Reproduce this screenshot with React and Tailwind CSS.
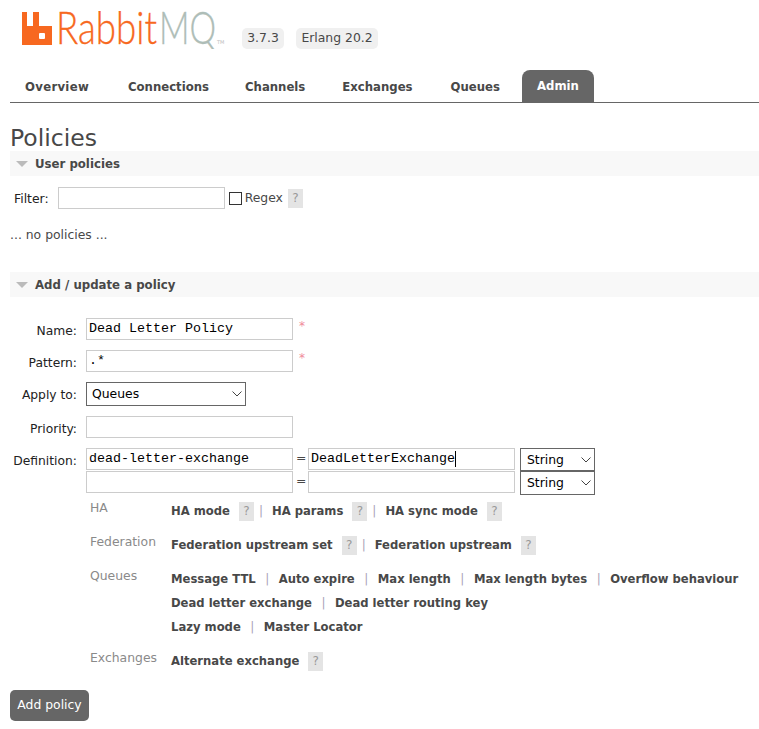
const sans = { fontFamily: '"DejaVu Sans", Verdana, sans-serif' };

function Help({ className = "" }) {
  return (
    <span className={`inline-flex h-[19px] w-[15px] items-center justify-center bg-[#e4e4e4] text-[12px] font-normal text-[#999] ${className}`}>?</span>
  );
}

function Sep({ className = "mx-[9.5px]" }) {
  return <span className={`text-[12px] font-normal text-[#a9a4b8] ${className}`}>|</span>;
}

function Section({ title }) {
  return (
    <div className="flex h-[25px] items-center bg-[#f8f8f8] pl-[6px] text-[11.75px] font-bold text-[#484848]">
      <span className="mr-[7px] h-0 w-0 border-x-[6px] border-t-[6px] border-x-transparent border-t-[#bbbbbb]" />
      <span className="pt-[2px]">{title}</span>
    </div>
  );
}

function TextBox({ value = "", className = "w-[207px]" }) {
  return (
    <input
      readOnly
      defaultValue={value}
      className={`block h-[22px] border-[#cccccc] bg-white pb-[2px] pl-[2px] text-[13.33px] text-black outline-none ${className}`}
      style={{ fontFamily: '"Liberation Mono", monospace', borderWidth: 1.5 }}
    />
  );
}

function Row({ label, className = "", children }) {
  return (
    <div className={`flex items-start ${className}`}>
      <label className="w-[67px] shrink-0 pt-[4px] text-right text-[12.3px] leading-[18px] text-[#222]">{label}</label>
      <div className="ml-[9px] flex items-start">{children}</div>
    </div>
  );
}

function Star() {
  return <span className="ml-[6px] text-[12px] leading-[16px] text-[#f08a9a]">*</span>;
}

function Chevron({ className = "" }) {
  return (
    <svg className={`pointer-events-none absolute ${className}`} width="10" height="6" viewBox="0 0 10 6" fill="none" stroke="#444" strokeWidth="1">
      <path d="M0.5 0.5L5 5L9.5 0.5" />
    </svg>
  );
}

function NativeSelect({ value, widthClass, heightClass, chevronClass, pad }) {
  return (
    <div className={`relative ${widthClass}`}>
      <select defaultValue={value} className={`block w-full appearance-none rounded-none border border-[#666] bg-white text-[12.4px] text-black ${heightClass} ${pad}`} style={sans}>
        <option>{value}</option>
      </select>
      <Chevron className={chevronClass} />
    </div>
  );
}

function Group({ label, className = "", children }) {
  return (
    <div className={`flex ${className}`}>
      <div className="w-[81px] shrink-0 pt-[2px] text-[12.4px] leading-[16px] text-[#8a8a8a]">{label}</div>
      <div className="mt-[1px] whitespace-nowrap text-[11.6px] font-bold leading-[24px] text-[#484848]">{children}</div>
    </div>
  );
}

export default function App() {
  return (
    <div className="min-h-[729px] bg-white pl-[10px] text-[#484848]" style={sans}>
      <header className="flex h-[70px] items-start pl-[12px] pt-[11px]">
        <svg className="shrink-0" width="206" height="38" viewBox="0 0 206 38" aria-label="RabbitMQ logo">
          <path fill="#F76820" d="M0 1H5V15H11V1H17V15H30V34H0Z" />
          <rect x="17" y="22" width="6" height="6" rx="1" fill="#fff" />
          <text x="34" y="33" fill="#F76820" stroke="#F76820" strokeWidth="0.35" fontSize="46" fontWeight="300" textLength="101" lengthAdjust="spacingAndGlyphs" style={{ fontFamily: "Lato, sans-serif" }}>Rabbit</text>
          <text x="137" y="33" fill="#AEBDB7" stroke="#AEBDB7" strokeWidth="0.35" fontSize="46" fontWeight="300" textLength="57" lengthAdjust="spacingAndGlyphs" style={{ fontFamily: "Lato, sans-serif" }}>MQ</text>
          <text x="195" y="33" fill="#bbb" fontSize="5">TM</text>
        </svg>
        <div className="ml-[14px] mt-[17px] flex gap-[12px] text-[12.4px] text-[#484848]">
          <span className="flex h-[21px] w-[42px] items-center justify-center rounded-[5px] bg-[#f0f0f0]">3.7.3</span>
          <span className="flex h-[21px] w-[82px] items-center justify-center rounded-[5px] bg-[#f0f0f0]">Erlang 20.2</span>
        </div>
      </header>

      <nav className="flex h-[33px] border-b border-[#666] text-[11.7px] font-bold">
        <a className="flex h-[33px] items-center pl-[15px] pr-[16px] pt-[2px] tracking-[0.3px] text-[#484848]">Overview</a>
        <a className="ml-[8px] flex h-[33px] items-center px-[15px] pt-[2px] text-[#484848]">Connections</a>
        <a className="ml-[6px] flex h-[33px] items-center px-[15px] pt-[2px] text-[#484848]">Channels</a>
        <a className="ml-[7px] flex h-[33px] items-center px-[15px] pt-[2px] text-[#484848]">Exchanges</a>
        <a className="ml-[8px] flex h-[33px] items-center px-[15px] pt-[2px] text-[#484848]">Queues</a>
        <a className="ml-[7px] flex h-[32px] items-center rounded-t-[8px] bg-[#666] px-[15px] pt-[2px] text-white">Admin</a>
      </nav>

      <h1 className="mt-[21px] h-[27px] text-[23.5px] font-normal leading-[28px] text-[#484848]">Policies</h1>
      <Section title="User policies" />

      <div className="mt-[11px] flex h-[22px] items-center text-[12.4px]">
        <label className="ml-[4px] pt-[2px] text-[#222]">Filter:</label>
        <TextBox className="ml-[9px] w-[167px]" />
        <span className="ml-[4px] h-[13px] w-[13px] border border-[#333] bg-white" />
        <span className="ml-[3px] text-[#484848]">Regex</span>
        <Help className="ml-[5px]" />
      </div>
      <p className="mt-[18px] text-[12.4px] leading-[16px] text-[#484848]">... no policies ...</p>

      <div className="mt-[29px]"><Section title="Add / update a policy" /></div>

      <div className="mt-[21px]">
        <Row label="Name:"><TextBox value="Dead Letter Policy" /><Star /></Row>
        <Row label="Pattern:" className="mt-[10px]"><TextBox value=".*" /><Star /></Row>
        <Row label="Apply to:" className="mt-[10px]">
          <NativeSelect value="Queues" widthClass="w-[160px]" heightClass="h-[24px]" pad="pl-[5px] pt-[1px]" chevronClass="right-[4px] top-[9px]" />
        </Row>
        <Row label="Priority:" className="mt-[10px]"><TextBox /></Row>
        <Row label="Definition:" className="mt-[10px]">
          <div>
            <div className="flex h-[23px] items-start">
              <TextBox value="dead-letter-exchange" />
              <span className="ml-[3px] mr-[5px] w-[7px] text-[12.4px] leading-[20px]">=</span>
              <div className="relative">
                <TextBox value="DeadLetterExchange" />
                <span className="absolute left-[147px] top-[3px] h-[16px] w-px bg-black" />
              </div>
              <div className="ml-[5px]">
                <NativeSelect value="String" widthClass="w-[75px]" heightClass="h-[23px]" pad="pl-[6px] pt-[2px]" chevronClass="right-[4px] top-[9px]" />
              </div>
            </div>
            <div className="flex h-[23px] items-start">
              <TextBox />
              <span className="ml-[3px] mr-[5px] w-[7px] text-[12.4px] leading-[20px]">=</span>
              <TextBox />
              <div className="ml-[5px]">
                <NativeSelect value="String" widthClass="w-[75px]" heightClass="h-[24px]" pad="pl-[6px] pt-[1px]" chevronClass="right-[4px] top-[9px]" />
              </div>
            </div>
          </div>
        </Row>
      </div>

      <div className="ml-[80px] mt-[4px]">
        <Group label="HA">
          <span className="inline-flex items-center">HA mode<Help className="ml-[9px]" /><Sep className="ml-[5px] mr-[9px]" />HA params<Help className="ml-[9px]" /><Sep className="ml-[5px] mr-[9px]" />HA sync mode<Help className="ml-[9px]" /></span>
        </Group>
        <Group label="Federation" className="mt-[9px]">
          <span className="inline-flex items-center">Federation upstream set<Help className="ml-[9px]" /><Sep className="ml-[5px] mr-[9px]" />Federation upstream<Help className="ml-[9px]" /></span>
        </Group>
        <Group label="Queues" className="mt-[9px]">
          <div className="flex items-center">Message TTL<Sep />Auto expire<Sep />Max length<Sep />Max length bytes<Sep />Overflow behaviour</div>
          <div className="flex items-center">Dead letter exchange<Sep />Dead letter routing key</div>
          <div className="flex items-center">Lazy mode<Sep />Master Locator</div>
        </Group>
        <Group label="Exchanges" className="mt-[9px]">
          <span className="inline-flex items-center">Alternate exchange<Help className="ml-[9px]" /></span>
        </Group>
      </div>

      <button className="mt-[17px] block h-[31px] w-[79px] rounded-[5px] bg-[#666] text-[12.4px] text-white" style={sans}>Add policy</button>
    </div>
  );
}
